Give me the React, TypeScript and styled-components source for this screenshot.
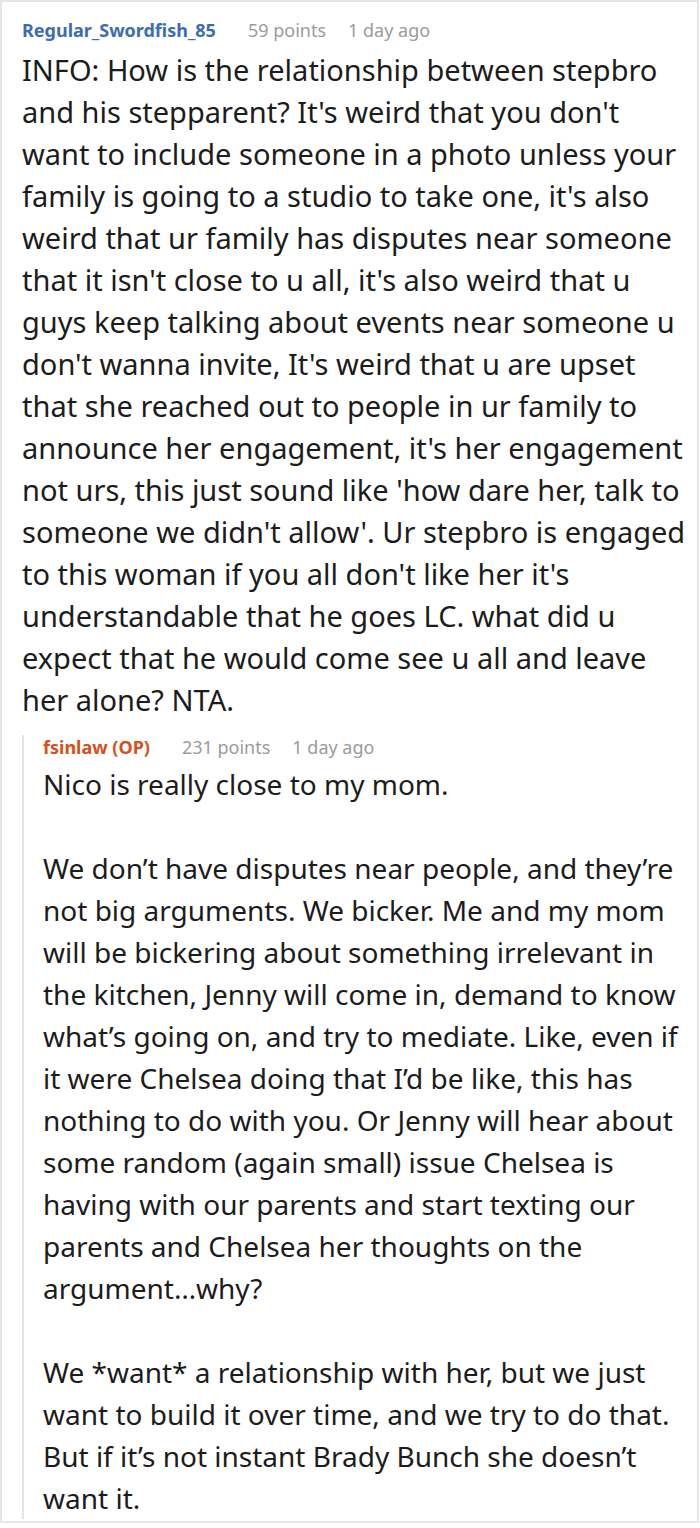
import React from 'react'
import styled, { createGlobalStyle } from 'styled-components'

const GlobalStyle = createGlobalStyle`
  html, body {
    margin: 0;
    padding: 0;
    background: #ffffff;
  }
  body {
    font-family: 'Noto Sans', 'Open Sans', sans-serif;
    color: #1c1c1c;
  }
`

const Thread = styled.section`
  box-sizing: border-box;
  width: 699px;
  height: 1523px;
  border: 2px solid #e6e6e6;
  padding: 16px 7px 0 20px;
`

const Header = styled.div<{ $gap?: number }>`
  display: flex;
  align-items: center;
  height: 24px;
  margin-bottom: ${({ $gap }) => $gap ?? 7}px;
  font-size: 18px;
  line-height: 24px;
`

const Author = styled.span<{ $op?: boolean }>`
  font-weight: 700;
  margin-right: 32px;
  color: ${({ $op }) => ($op ? '#d5501c' : '#3a6db5')};
`

const Meta = styled.span`
  color: #9b9b9b;

  & + & {
    margin-left: 22px;
  }
`

const Body = styled.div<{ $size: number }>`
  font-size: ${({ $size }) => $size}px;
  line-height: 42px;

  & p {
    margin: 0;
  }

  & p + p {
    margin-top: 42px;
  }
`

const Reply = styled.div`
  margin-top: 14px;
  border-left: 2px solid #e4e4e4;
  padding-left: 19px;

  & p:last-child {
    margin-bottom: -11px;
  }
`

type CommentProps = {
  author: string
  points: number
  age: string
  op?: boolean
  gap?: number
  size: number
  children: React.ReactNode
}

function Comment({ author, points, age, op, gap, size, children }: CommentProps) {
  return (
    <>
      <Header $gap={gap}>
        <Author $op={op}>{author}</Author>
        <Meta>{points} points</Meta>
        <Meta>{age}</Meta>
      </Header>
      <Body $size={size}>{children}</Body>
    </>
  )
}

export default function App() {
  return (
    <>
      <GlobalStyle />
      <Thread>
        <Comment author="Regular_Swordfish_85" points={59} age="1 day ago" size={29}>
          <p>
            INFO: How is the relationship between stepbro and his stepparent? It's weird that you don't want
            to include someone in a photo unless your family is going to a studio to take one, it's also weird
            that ur family has disputes near someone that it isn't close to u all, it's also weird that u guys
            keep talking about events near someone u don't wanna invite, It's weird that u are upset that she
            reached out to people in ur family to announce her engagement, it's her engagement not urs, this
            just sound like 'how dare her, talk to someone we didn't allow'. Ur stepbro is engaged to this woman
            if you all don't like her it's understandable that he goes LC. what did u expect that he would come
            see u all and leave her alone? NTA.
          </p>
        </Comment>

        <Reply>
          <Comment author="fsinlaw (OP)" points={231} age="1 day ago" op gap={4} size={28}>
            <p>Nico is really close to my mom.</p>
            <p>
              We don’t have disputes near people, and they’re not big arguments. We bicker. Me and my mom will be
              bickering about something irrelevant in the kitchen, Jenny will come in, demand to know what’s
              going on, and try to mediate. Like, even if it were Chelsea doing that I’d be like, this has
              nothing to do with you. Or Jenny will hear about some random (again small) issue Chelsea is having
              with our parents and start texting our parents and Chelsea her thoughts on the argument…why?
            </p>
            <p>
              We *want* a relationship with her, but we just want to build it over time, and we try to do that.
              But if it’s not instant Brady Bunch she doesn’t want it.
            </p>
          </Comment>
        </Reply>
      </Thread>
    </>
  )
}
